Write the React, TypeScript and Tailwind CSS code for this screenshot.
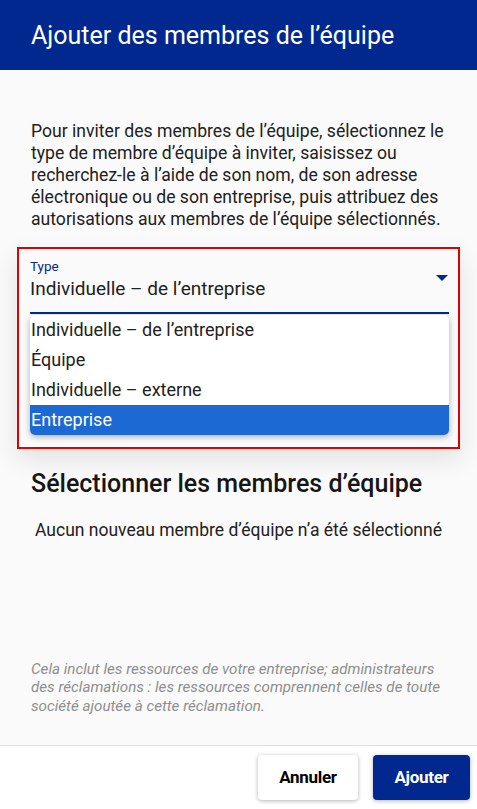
import React from "react";

const options = [
  "Individuelle – de l’entreprise",
  "Équipe",
  "Individuelle – externe",
  "Entreprise",
];

export default function App() {
  return (
    <div className="flex h-[809px] w-[477px] flex-col bg-[#fafafa] font-['Roboto',sans-serif] text-[#212121]">
      <header className="flex h-[70px] shrink-0 items-center bg-[#00288f] px-[31px]">
        <h1 className="text-[25px] font-normal leading-none text-white">
          Ajouter des membres de l’équipe
        </h1>
      </header>

      <main className="flex flex-1 flex-col">
        <p className="mt-[50px] px-[31px] text-[17.6px] leading-[22px] text-[#212121]">
          Pour inviter des membres de l’équipe, sélectionnez le type de membre
          d’équipe à inviter, saisissez ou recherchez-le à l’aide de son nom, de
          son adresse électronique ou de son entreprise, puis attribuez des
          autorisations aux membres de l’équipe sélectionnés.
        </p>

        <div className="mx-[17px] mt-[17px] h-[202px] border-2 border-[#e00000] pl-[11px] pr-[9px] pt-[9px] shadow-[0_10px_24px_rgba(0,0,0,0.1)]">
          <div className="relative border-b-2 border-[#00288f] pb-[11px]">
            <div className="text-[13.5px] leading-[16px] text-[#00288f]">Type</div>
            <div className="mt-[3px] text-[19px] leading-[24px] text-[#212121]">
              Individuelle – de l’entreprise
            </div>
            <svg
              className="absolute right-[1px] top-[17px]"
              width="12"
              height="6"
              viewBox="0 0 12 6"
            >
              <path d="M0 0h12L6 6z" fill="#00288f" />
            </svg>
          </div>
          <ul className="mt-px overflow-hidden rounded-[5px] bg-white shadow-[0_2px_6px_rgba(0,0,0,0.3)]">
            {options.map((o, i) => (
              <li
                key={o}
                className={
                  i === 3
                    ? "h-[30px] bg-[#1c69d4] px-[1px] text-[18px] leading-[30px] text-white"
                    : "h-[30px] px-[1px] text-[18px] leading-[30px] text-[#212121]"
                }
              >
                {o}
              </li>
            ))}
          </ul>
        </div>

        <h2 className="mt-[20px] px-[31px] text-[25px] font-medium leading-[30px] text-[#161616]">
          Sélectionner les membres d’équipe
        </h2>
        <p className="mt-[20px] text-center text-[17.5px] leading-[22px] text-[#212121]">
          Aucun nouveau membre d’équipe n’a été sélectionné
        </p>

        <p className="mt-auto mb-[30px] px-[31px] text-[15.2px] italic leading-[18.5px] text-[#8e8e8e]">
          Cela inclut les ressources de votre entreprise; administrateurs des
          réclamations : les ressources comprennent celles de toute société
          ajoutée à cette réclamation.
        </p>
      </main>

      <footer className="flex h-[64px] shrink-0 items-center justify-end gap-[15px] border-t border-[#dcdcdc] bg-white pr-[7px]">
        <button className="h-[45px] w-[100px] rounded-[4px] bg-white text-[17px] font-bold tracking-[-0.3px] text-black shadow-[0_1px_4px_rgba(0,0,0,0.3)]">
          Annuler
        </button>
        <button className="h-[45px] w-[97px] rounded-[4px] bg-[#00288f] text-[17px] font-bold tracking-[-0.3px] text-white shadow-[0_1px_4px_rgba(0,0,0,0.3)]">
          Ajouter
        </button>
      </footer>
    </div>
  );
}
